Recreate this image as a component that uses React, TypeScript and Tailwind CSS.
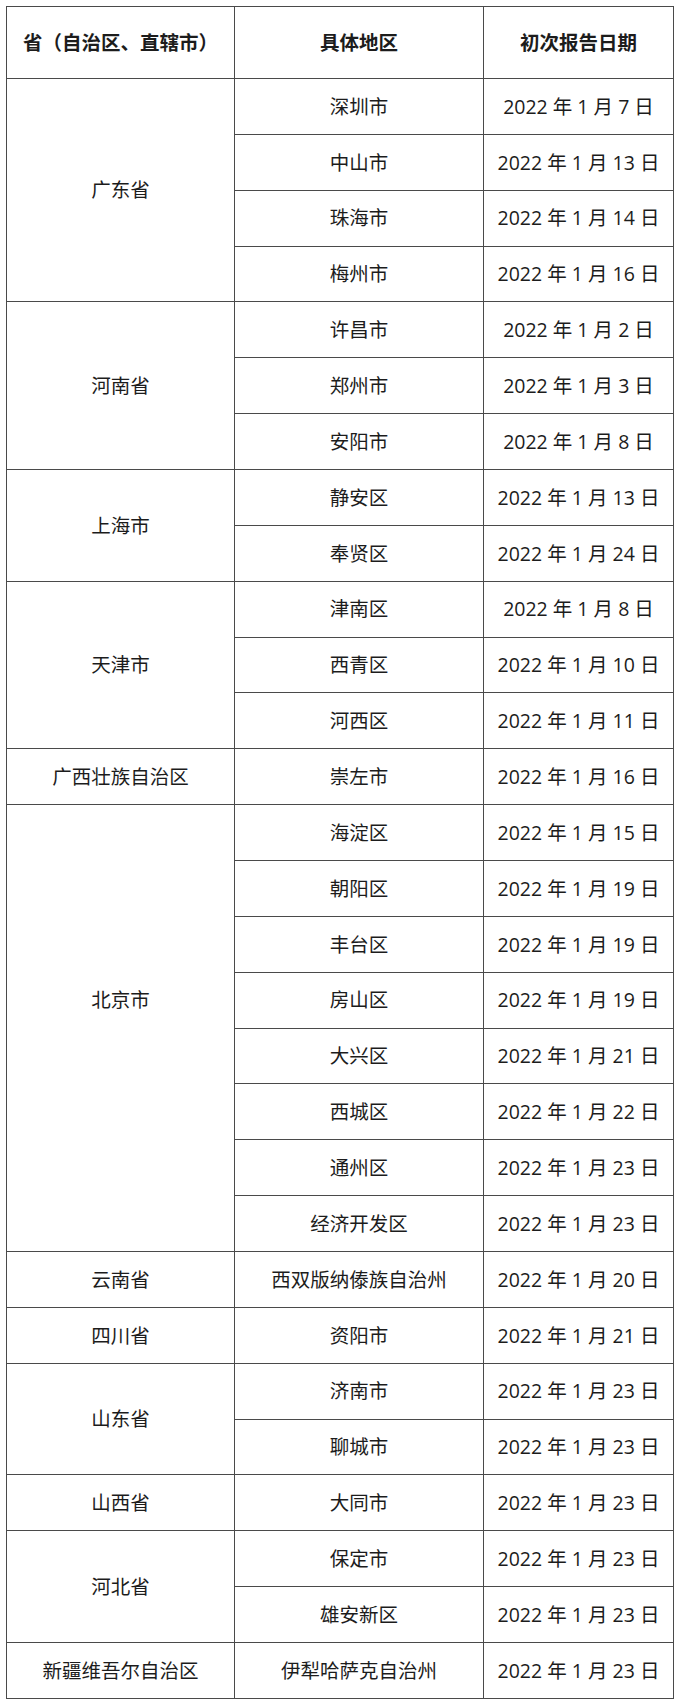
import React from "react";

type Group = { p: string; items: [string, string][]; extra?: string };

const data: Group[] = [
  { p: "广东省", items: [["深圳市", "7"], ["中山市", "13"], ["珠海市", "14"], ["梅州市", "16"]] },
  { p: "河南省", items: [["许昌市", "2"], ["郑州市", "3"], ["安阳市", "8"]] },
  { p: "上海市", items: [["静安区", "13"], ["奉贤区", "24"]] },
  { p: "天津市", items: [["津南区", "8"], ["西青区", "10"], ["河西区", "11"]] },
  { p: "广西壮族自治区", items: [["崇左市", "16"]] },
  {
    p: "北京市",
    extra: " pb-[56px]",
    items: [
      ["海淀区", "15"],
      ["朝阳区", "19"],
      ["丰台区", "19"],
      ["房山区", "19"],
      ["大兴区", "21"],
      ["西城区", "22"],
      ["通州区", "23"],
      ["经济开发区", "23"],
    ],
  },
  { p: "云南省", items: [["西双版纳傣族自治州", "20"]] },
  { p: "四川省", items: [["资阳市", "21"]] },
  { p: "山东省", items: [["济南市", "23"], ["聊城市", "23"]] },
  { p: "山西省", items: [["大同市", "23"]] },
  { p: "河北省", items: [["保定市", "23"], ["雄安新区", "23"]] },
  { p: "新疆维吾尔自治区", items: [["伊犁哈萨克自治州", "23"]] },
];

const cell = "border border-[#4a4a4a] text-center align-middle p-0";

export default function App() {
  return (
    <div
      className="bg-white pt-[6px] pl-[6px] pb-[6px] w-[677px] text-[#1c1c1c]"
      style={{ fontFamily: '"Open Sans", "Noto Sans CJK SC", sans-serif' }}
    >
      <table className="border-collapse w-[667px] table-fixed text-[19.5px] leading-none">
        <colgroup>
          <col className="w-[228px]" />
          <col className="w-[249px]" />
          <col className="w-[190px]" />
        </colgroup>
        <thead>
          <tr className="h-[72px]">
            <th className={cell + " font-bold"}>省（自治区、直辖市）</th>
            <th className={cell + " font-bold"}>具体地区</th>
            <th className={cell + " font-bold"}>初次报告日期</th>
          </tr>
        </thead>
        <tbody>
          {data.map((g) =>
            g.items.map(([city, day], i) => (
              <tr key={g.p + city} className="h-[55.86px]">
                {i === 0 && (
                  <td className={cell + (g.extra ?? "")} rowSpan={g.items.length}>
                    {g.p}
                  </td>
                )}
                <td className={cell}>{city}</td>
                <td className={cell}>2022 年 1 月 {day} 日</td>
              </tr>
            ))
          )}
        </tbody>
      </table>
    </div>
  );
}
